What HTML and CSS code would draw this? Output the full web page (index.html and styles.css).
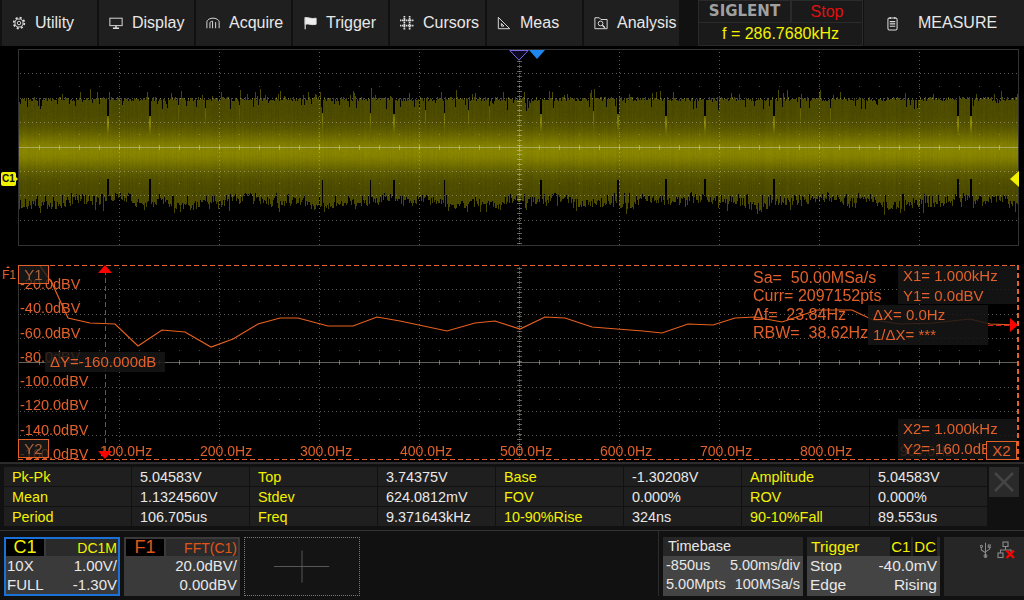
FILE: index.html
```html
<!DOCTYPE html>
<html lang="en">
<head>
    <meta charset="UTF-8">
    <title>SIGLENT scope</title>
    <link rel="stylesheet" href="styles.css">
</head>
<body>
    <div class="scope">
        <header class="menu-bar">
            <div class="menu-btn">
                <svg class="menu-icon" viewBox="0 0 16 16"><circle cx="8" cy="8" r="6.1" stroke-width="2" stroke-dasharray="2.4 2.39"/><circle cx="8" cy="8" r="4.6"/><circle cx="8" cy="8" r="2"/></svg>
                <span>Utility</span>
            </div>
            <div class="menu-btn">
                <svg class="menu-icon" viewBox="0 0 16 16"><rect x="1" y="2.5" width="14" height="8.5"/><path d="M8 11v2.5M4.5 14h7" stroke-width="1.6"/></svg>
                <span>Display</span>
            </div>
            <div class="menu-btn">
                <svg class="menu-icon" viewBox="0 0 16 16"><path d="M1 14V7C1 4 5 2.5 8 2.5S15 4 15 7v7M4.5 14V8C4.5 6.8 6 6 7.5 6M7.5 6V14M11 14V7"/></svg>
                <span>Acquire</span>
            </div>
            <div class="menu-btn">
                <svg class="menu-icon" viewBox="0 0 16 16"><path class="icon-solid" d="M2.5 2C6 1 9 4 15 2.5V9.5C10 11 6 8 2.5 9.5Z"/><path d="M2.5 1.5V15" stroke-width="1.4"/></svg>
                <span>Trigger</span>
            </div>
            <div class="menu-btn">
                <svg class="menu-icon" viewBox="0 0 16 16"><path d="M5 0V16M11 0V16M0 5H16M0 11H16" stroke-width="2" stroke-dasharray="1.6 .7"/></svg>
                <span>Cursors</span>
            </div>
            <div class="menu-btn">
                <svg class="menu-icon" viewBox="0 0 16 16"><path d="M1.5 14.5V1.5L14.5 14.5ZM5 11.5V8.5L8 11.5Z"/></svg>
                <span>Meas</span>
            </div>
            <div class="menu-btn">
                <svg class="menu-icon" viewBox="0 0 16 16"><path d="M1 14.5V2H6L8 4H15V14.5Z"/><circle cx="7.5" cy="8.5" r="2.7"/><path d="M9.5 10.5L12.5 13.5" stroke-width="1.6"/></svg>
                <span>Analysis</span>
            </div>
            <div class="status-box">
                <div class="status-top">
                    <div class="brand">SIGLENT</div>
                    <div class="run-state">Stop</div>
                </div>
                <div class="freq-read">f = 286.7680kHz</div>
            </div>
            <div class="menu-title">
                <svg class="menu-icon clip-icon" viewBox="0 0 12 16"><rect x="1" y="2" width="10" height="13" rx="1.5"/><path d="M3.5 1v2M8.5 1v2M3 6h6M3 8.5h6M3 11h6" stroke-width="1.3"/></svg>
                <span>MEASURE</span>
            </div>
        </header>

        <main class="screen">
            <div class="plot plot-time">
                <canvas id="time-canvas" width="1002" height="197"></canvas>
                <svg class="trig-pos" viewBox="0 0 20 11"><path d="M.8 .5H19.2L10 10.2Z"/></svg>
                <div class="tri tri-blue"></div>
                <div class="ch-tag">C1</div>
                <div class="tri tri-level"></div>
            </div>

            <div class="plot plot-fft">
                <canvas id="fft-canvas" width="1002" height="196"></canvas>
                <div class="f1-mark">F1</div>

                <div class="y-scale">
                    <div>-20.0dBV</div>
                    <div>-40.0dBV</div>
                    <div>-60.0dBV</div>
                    <div>-80.0dBV</div>
                    <div>-100.0dBV</div>
                    <div>-120.0dBV</div>
                    <div>-140.0dBV</div>
                    <div>-160.0dBV</div>
                </div>
                <div class="x-scale">
                    <div>100.0Hz</div>
                    <div>200.0Hz</div>
                    <div>300.0Hz</div>
                    <div>400.0Hz</div>
                    <div>500.0Hz</div>
                    <div>600.0Hz</div>
                    <div>700.0Hz</div>
                    <div>800.0Hz</div>
                    <div>900.0Hz</div>
                </div>

                <div class="fft-info">
                    <div>Sa=&nbsp;&nbsp;50.00MSa/s</div>
                    <div>Curr= 2097152pts</div>
                    <div>&#916;f=&nbsp;&nbsp;23.84Hz</div>
                    <div>RBW=&nbsp;&nbsp;38.62Hz</div>
                </div>

                <div class="cursor-box box-x1">
                    <div>X1= 1.000kHz</div>
                    <div>Y1= 0.0dBV</div>
                </div>
                <div class="cursor-box box-dx">
                    <div>&#916;X= 0.0Hz</div>
                    <div>1/&#916;X= ***</div>
                </div>
                <div class="cursor-box box-x2">
                    <div>X2= 1.000kHz</div>
                    <div>Y2=-160.0dBV</div>
                </div>
                <div class="cursor-box box-dy">&#916;Y=-160.000dB</div>

                <div class="cursor-tag tag-y1">Y1</div>
                <div class="cursor-tag tag-y2">Y2</div>
                <div class="cursor-tag tag-x2">X2</div>

                <div class="tri tri-red-up"></div>
                <div class="tri tri-red-down"></div>
                <div class="tri tri-red-right"></div>
            </div>
        </main>

        <section class="measure-panel">
            <div class="measure-grid">
                <div class="m-name">Pk-Pk</div><div class="m-val">5.04583V</div>
                <div class="m-name">Top</div><div class="m-val">3.74375V</div>
                <div class="m-name">Base</div><div class="m-val">-1.30208V</div>
                <div class="m-name">Amplitude</div><div class="m-val">5.04583V</div>
                <div class="m-name">Mean</div><div class="m-val">1.1324560V</div>
                <div class="m-name">Stdev</div><div class="m-val">624.0812mV</div>
                <div class="m-name">FOV</div><div class="m-val">0.000%</div>
                <div class="m-name">ROV</div><div class="m-val">0.000%</div>
                <div class="m-name">Period</div><div class="m-val">106.705us</div>
                <div class="m-name">Freq</div><div class="m-val">9.371643kHz</div>
                <div class="m-name">10-90%Rise</div><div class="m-val">324ns</div>
                <div class="m-name">90-10%Fall</div><div class="m-val">89.553us</div>
            </div>
            <div class="close-btn">
                <svg viewBox="0 0 30 30"><path d="M6 6L24 24M24 6L6 24"/></svg>
            </div>
        </section>

        <footer class="status-bar">
            <div class="ch-card ch-active">
                <div class="ch-head">
                    <div class="ch-name ch-yellow">C1</div>
                    <div class="ch-mode ch-yellow">DC1M</div>
                </div>
                <div class="ch-row"><span>10X</span><span>1.00V/</span></div>
                <div class="ch-row"><span>FULL</span><span>-1.30V</span></div>
            </div>
            <div class="ch-card">
                <div class="ch-head">
                    <div class="ch-name ch-orange">F1</div>
                    <div class="ch-mode ch-orange">FFT(C1)</div>
                </div>
                <div class="ch-row"><span></span><span>20.0dBV/</span></div>
                <div class="ch-row"><span></span><span>0.00dBV</span></div>
            </div>
            <div class="ch-add">
                <svg viewBox="0 0 116 59"><path d="M29 29.5H86M58 13V46"/></svg>
            </div>

            <div class="status-right">
                <div class="info-card card-time">
                    <div class="info-head">Timebase</div>
                    <div class="info-body">
                        <div class="info-row"><span>-850us</span><span>5.00ms/div</span></div>
                        <div class="info-row"><span>5.00Mpts</span><span>100MSa/s</span></div>
                    </div>
                </div>
                <div class="info-card card-trig">
                    <div class="info-head trig-head">
                        <span class="trig-title">Trigger</span>
                        <span class="trig-tag">C1</span>
                        <span class="trig-tag">DC</span>
                    </div>
                    <div class="info-body">
                        <div class="info-row"><span>Stop</span><span>-40.0mV</span></div>
                        <div class="info-row"><span>Edge</span><span>Rising</span></div>
                    </div>
                </div>
                <div class="tray">
                    <svg class="tray-icon" viewBox="0 0 12 18"><path d="M6 1V17M1.5 6V9L6 12M10.5 5V8L6 11" /><circle cx="6" cy="15.5" r="1.6"/><rect x="9" y="3.5" width="3" height="2.5"/><circle cx="1.5" cy="5" r="1.3"/></svg>
                    <svg class="tray-icon net-icon" viewBox="0 0 18 18"><rect x="6" y="1" width="5" height="4.5"/><rect x="1" y="12" width="5" height="4.5"/><path d="M8.5 5.5V9M3.5 12V9H14V11"/><path class="net-x" d="M9.5 9.5L17 17M17 9.5L9.5 17"/></svg>
                </div>
            </div>
        </footer>
    </div>

    <script src="plot.js"></script>
</body>
</html>
```
FILE: styles.css
```css
* {
    box-sizing: border-box;
}

body {
    margin: 0;
    background-color: #000;
    font-family: "Liberation Sans", Arial, sans-serif;
    color: #e8e8e8;
}

.scope {
    width: 1024px;
    height: 600px;
    overflow: hidden;
    display: flex;
    flex-direction: column;
}

/* top menu */
.menu-bar {
    height: 46px;
    flex: none;
    display: flex;
    gap: 2px;
    padding-left: 2px;
    background-color: #111;
    font-size: 16px;
}

.menu-btn {
    width: 95px;
    display: flex;
    align-items: center;
    gap: 9px;
    padding-left: 10px;
    background-color: #1f1f1f;
}

.menu-icon {
    width: 14px;
    height: 14px;
    flex: none;
    fill: none;
    stroke: #ddd;
    stroke-width: 1.1;
}

.clip-icon {
    width: 11px;
    height: 15px;
}

.icon-solid {
    fill: #eee;
}

.status-box {
    width: 165px;
    margin-left: 17px;
    display: flex;
    flex-direction: column;
    border: 1px solid #2a2a2a;
    background-color: #1a1a1a;
}

.status-top {
    height: 22px;
    display: flex;
    border-bottom: 1px solid #2a2a2a;
}

.brand {
    width: 93px;
    border-right: 2px solid #2a2a2a;
    text-align: center;
    font-family: "DejaVu Sans", sans-serif;
    font-weight: 700;
    font-size: 15px;
    line-height: 20px;
    color: #a0a0a0;
}

.run-state {
    flex: 1;
    text-align: center;
    line-height: 21px;
    color: #e01010;
}

.freq-read {
    flex: 1;
    text-align: center;
    line-height: 21px;
    color: #f2f200;
}

.menu-title {
    flex: 1;
    margin-left: -1px;
    display: flex;
    align-items: center;
    gap: 20px;
    padding-left: 23px;
    background-color: #1f1f1f;
}

/* plots */
.screen {
    height: 416px;
    flex: none;
    padding-top: 3px;
}

.plot {
    position: relative;
    overflow: hidden;
}

.plot canvas {
    display: block;
    margin-left: 18px;
}

.plot-time {
    height: 197px;
}

.plot-fft {
    height: 196px;
    margin-top: 19px;
    color: #e2602a;
}

.tri {
    position: absolute;
    width: 0;
    height: 0;
    border-style: solid;
    border-color: transparent;
}

.trig-pos {
    position: absolute;
    left: 509px;
    top: 1px;
    width: 20px;
    height: 11px;
    fill: #0c0820;
    stroke: #7a68e0;
    stroke-width: 1;
}

.tri-blue {
    left: 529px;
    top: 1px;
    border-width: 9px 8.5px 0;
    border-top-color: #1e88ee;
}

.tri-level {
    left: 1010px;
    top: 122px;
    border-width: 8px 9px 8px 0;
    border-right-color: #f2f200;
}

.ch-tag {
    position: absolute;
    left: 1px;
    top: 123px;
    width: 15px;
    height: 14px;
    border-radius: 2px;
    background-color: #f2f200;
    color: #111;
    font-size: 10px;
    font-weight: 700;
    line-height: 14px;
    text-align: center;
}

.ch-tag::after {
    content: "";
    position: absolute;
    left: 15px;
    top: 5px;
    border-style: solid;
    border-width: 2px 0 2px 2px;
    border-color: transparent transparent transparent #f2f200;
}

.f1-mark {
    position: absolute;
    left: 2px;
    top: 4px;
    font-size: 12px;
    line-height: 12px;
}

.f1-mark::before {
    content: "";
    position: absolute;
    left: 4px;
    top: -3px;
    border-style: solid;
    border-width: 0 2.5px 2px;
    border-color: transparent transparent #e2602a;
}

.y-scale {
    position: absolute;
    left: 20px;
    top: 7px;
    font-size: 14.5px;
}

.y-scale div {
    height: 24.3px;
    line-height: 24.3px;
}

.x-scale {
    position: absolute;
    left: 100px;
    top: 177px;
    display: flex;
    font-size: 14px;
    line-height: 18px;
}

.x-scale div {
    width: 100px;
}

.fft-info {
    position: absolute;
    left: 753px;
    top: 4px;
    font-size: 16px;
    line-height: 18.4px;
}

.cursor-box {
    position: absolute;
    padding-left: 5px;
    overflow: hidden;
    background-color: rgba(22, 22, 22, 0.85);
    font-size: 15px;
    line-height: 19.5px;
    white-space: nowrap;
}

.box-x1 {
    left: 898px;
    top: 1px;
    width: 119px;
    height: 38px;
}

.box-dx {
    left: 868px;
    top: 40px;
    width: 120px;
    height: 40px;
}

.box-x2 {
    left: 898px;
    top: 154px;
    width: 119px;
    height: 40px;
}

.box-dy {
    left: 45px;
    top: 87px;
    width: 120px;
    height: 20px;
}

.cursor-tag {
    position: absolute;
    width: 31px;
    height: 19px;
    border: 1px solid #e2602a;
    background-color: rgba(30, 30, 30, 0.75);
    color: #a8623c;
    font-size: 15px;
    line-height: 17px;
    text-align: center;
}

.tag-y1 {
    left: 18px;
    top: 0;
}

.tag-y2 {
    left: 18px;
    top: 174px;
}

.tag-x2 {
    left: 986px;
    top: 176px;
    background-color: #161616;
    color: #e2602a;
}

.tri-red-up {
    left: 98px;
    top: 0;
    border-width: 0 7.5px 8px;
    border-bottom-color: #f00;
}

.tri-red-down {
    left: 98px;
    top: 186px;
    border-width: 8px 7.5px 0;
    border-top-color: #f00;
}

.tri-red-right {
    left: 1010px;
    top: 53px;
    border-width: 7.5px 0 7.5px 8px;
    border-left-color: #f00;
}

/* measurement table */
.measure-panel {
    height: 68px;
    flex: none;
    display: flex;
    padding: 3px 4px 0;
    background-color: #111;
    border-top: 2px solid #2c2c2c;
    font-size: 14.4px;
}

.measure-grid {
    display: grid;
    grid-template-columns: repeat(4, 127px 117px);
    grid-auto-rows: 19px;
    column-gap: 1px;
    row-gap: 1px;
}

.m-name,
.m-val {
    padding-left: 8px;
    background-color: #1f1f1f;
    line-height: 21px;
}

.m-name {
    color: #f2f200;
}

.close-btn {
    width: 30px;
    height: 30px;
    margin-left: 2px;
    background-color: #2a2a2a;
}

.close-btn svg {
    display: block;
    stroke: #454545;
    stroke-width: 2.5;
}

/* bottom status */
.status-bar {
    flex: 1;
    display: flex;
    gap: 4px;
    padding: 6px 0 4px 4px;
    background-color: #111;
    border-top: 1px solid #333;
    font-size: 15px;
}

.ch-card {
    width: 116px;
    border: 2px solid #3a3a3a;
    background-color: #3a3a3a;
}

.ch-active {
    border-color: #1a72d8;
}

.ch-head {
    height: 17px;
    display: flex;
    gap: 2px;
}

.ch-name {
    width: 38px;
    background-color: #000;
    font-size: 18px;
    line-height: 17px;
    text-align: center;
}

.ch-mode {
    flex: 1;
    padding-right: 1px;
    background-color: #2a2a2a;
    font-size: 14px;
    line-height: 18px;
    text-align: right;
}

.ch-yellow {
    color: #f2f200;
}

.ch-orange {
    color: #e0561a;
}

.ch-row {
    display: flex;
    justify-content: space-between;
    height: 19px;
    padding: 0 1px;
    line-height: 19px;
}

.ch-add {
    width: 116px;
    border: 1px dotted #777;
    background-color: #141414;
}

.ch-add svg {
    display: block;
    width: 114px;
    height: 57px;
    stroke: #5a5a5a;
    fill: none;
}

.status-right {
    margin-left: auto;
    display: flex;
    gap: 4px;
    margin-top: -6px;
    padding-top: 6px;
    padding-left: 4px;
    border-left: 1px solid #2c2c2c;
}

.info-card {
    display: flex;
    flex-direction: column;
    background-color: #444;
}

.card-time {
    width: 140px;
    font-size: 14.5px;
}

.card-trig {
    width: 133px;
    font-size: 15.5px;
}

.info-head {
    height: 19px;
    padding-left: 5px;
    background-color: #262626;
    line-height: 19px;
}

.info-body {
    padding: 0 3px;
}

.info-row {
    display: flex;
    justify-content: space-between;
    height: 19px;
    line-height: 19px;
}

.trig-head {
    display: flex;
    gap: 2px;
    padding: 0 3px 0 4px;
    color: #f2f200;
}

.trig-title {
    flex: 1;
}

.trig-tag {
    padding: 0 1px;
    background-color: #111;
    font-size: 15px;
}

.tray {
    width: 80px;
    display: flex;
    justify-content: flex-end;
    gap: 6px;
    padding: 4px 9px 0 0;
    background-color: #262626;
}

.tray-icon {
    width: 11px;
    height: 18px;
    fill: none;
    stroke: #8a8a8a;
    stroke-width: 1.1;
}

.net-icon {
    width: 18px;
}

.net-x {
    stroke: #f00;
    stroke-width: 2.4;
}
```
FILE: plot.js
```js
// Draws the two scope traces. Everything is in page pixels, the canvases start at x=18.
const LEFT = 18;
const TRACE_ORANGE = "#e8601e";

let seed = 20117;
function rnd() {
    seed = (seed * 1664525 + 1013904223) % 4294967296;
    return seed / 4294967296;
}

// x, strength of the dropouts in the yellow band
const dropouts = [
    [107, 1], [149, 1], [178, 0.3], [205, 0.5], [239, 0.3], [322, 0.8], [370, 0.8],
    [393, 0.9], [425, 0.6], [444, 0.8], [468, 0.6], [489, 0.4], [540, 0.9], [593, 0.7],
    [617, 0.9], [665, 1], [704, 1], [773, 1], [800, 0.5], [830, 0.5], [957, 1], [970, 1]
];

// frequency trace points, read off the screen
const spectrum = [
    [40, 266], [52, 283], [62, 305], [68, 318], [90, 323], [115, 324], [138, 346], [162, 330],
    [185, 332], [211, 347], [233, 339], [258, 324], [280, 318], [298, 318], [328, 326], [353, 326],
    [377, 317], [400, 321], [447, 331], [475, 323], [495, 321], [520, 329], [545, 317], [565, 318],
    [592, 327], [617, 329], [643, 331], [662, 333], [688, 324], [713, 325], [735, 318], [755, 317],
    [782, 322], [817, 310], [852, 310], [873, 320], [900, 324], [933, 323], [970, 319], [990, 324],
    [1017, 325]
];

function drawBand(ctx, top) {
    const w = ctx.canvas.width;
    const h = ctx.canvas.height;
    const img = ctx.createImageData(w, h);

    for (let x = 19; x < 1018; x++) {
        let bandTop = 97 + rnd() * 4;
        let bandBottom = 197 + rnd() * 9 + 3 * Math.sin(x / 23) + 2 * Math.sin(x / 7);
        const roll = rnd();
        if (roll < 0.08) bandTop -= 3 + rnd() * 6;
        else if (roll < 0.16) bandTop += 3 + rnd() * 7;
        if (rnd() < 0.2) bandBottom += rnd() * 7;
        if (rnd() < 0.1) bandBottom = 193 + rnd() * 4;
        const colShade = (rnd() - 0.5) * 6;

        let drop = null;
        for (const d of dropouts) {
            if (x === d[0] || (d[1] >= 0.9 && x === d[0] + 1)) drop = d;
        }
        if (drop) {
            bandTop = 100 + drop[1] * 16;
            if (drop[1] > 0.75) bandBottom = 186 - drop[1] * 7;
        }

        for (let y = Math.round(bandTop); y < Math.round(bandBottom); y++) {
            const d = y - 151;
            let v = 75 + 60 * Math.exp(-(d * d) / 380) + colShade + (rnd() - 0.5) * 6;
            if (drop) {
                const off = y - bandTop - 6;
                v += 55 * drop[1] * Math.exp(-(off * off) / 60);
            }
            const i = ((y - top) * w + (x - LEFT)) * 4;
            img.data[i] = v;
            img.data[i + 1] = v * 0.98;
            img.data[i + 2] = 0;
            img.data[i + 3] = 255;
        }
    }
    ctx.putImageData(img, 0, 0);
}

function drawGrid(ctx, top, step, rows) {
    const bottom = top + step * rows;
    const centerY = Math.round(top + step * rows / 2 - 0.3);

    // dotted grid
    ctx.fillStyle = "rgba(200, 200, 190, 0.45)";
    for (let x = 119; x < 1010; x += 100) {
        if (x === 519) continue;
        for (let y = top + 2; y < bottom; y += 4) ctx.fillRect(x, Math.round(y), 1, 1);
    }
    for (let r = 1; r < rows; r++) {
        if (r === rows / 2) continue;
        const y = Math.floor(top + step * r);
        for (let x = 20; x < 1018; x += 4) ctx.fillRect(x, y, 1, 1);
    }

    // sparse dots half way between the rows
    ctx.fillStyle = "rgba(200, 200, 190, 0.35)";
    for (let r = 1; r < rows - 1; r += 2) {
        const y = Math.floor(top + step * (r + 0.5));
        for (let x = 39; x < 1018; x += 20) ctx.fillRect(x, y, 1, 1);
    }

    // centre axes with ticks
    ctx.fillStyle = "rgba(215, 215, 200, 0.45)";
    ctx.fillRect(19, centerY, 999, 1);
    for (let x = 39; x < 1018; x += 20) ctx.fillRect(x, centerY - 2, 1, 5);
    for (let y = top + 1; y < bottom; y += 2) ctx.fillRect(519, Math.round(y), 1, 1);
    for (let y = top + 2; y < bottom; y += 4.9) ctx.fillRect(517, Math.round(y), 5, 1);

    // frame
    ctx.fillStyle = "#333";
    ctx.fillRect(18, top - 0.5, 1, bottom - top + 1);
}

function dashed(ctx, color, x1, y1, x2, y2, dash) {
    ctx.save();
    ctx.strokeStyle = color;
    ctx.setLineDash(dash);
    ctx.beginPath();
    ctx.moveTo(x1, y1);
    ctx.lineTo(x2, y2);
    ctx.stroke();
    ctx.restore();
}

function drawTime() {
    const ctx = document.getElementById("time-canvas").getContext("2d");
    const top = 49;
    drawBand(ctx, top);
    ctx.translate(-LEFT, -top);
    drawGrid(ctx, 49.5, 24.4, 8);
    ctx.strokeStyle = "#333";
    ctx.strokeRect(18.5, 49.5, 1000, 196);
}

function drawFft() {
    const ctx = document.getElementById("fft-canvas").getContext("2d");
    const top = 265;
    ctx.translate(-LEFT, -top);
    drawGrid(ctx, 265.5, 24.3, 8);

    ctx.strokeStyle = TRACE_ORANGE;
    ctx.lineWidth = 1.2;
    ctx.beginPath();
    spectrum.forEach((p, i) => {
        if (i === 0) ctx.moveTo(p[0], p[1]);
        else ctx.lineTo(p[0], p[1]);
    });
    ctx.stroke();
    ctx.lineWidth = 1;

    dashed(ctx, "#e2602a", 18, 265.5, 1019, 265.5, [5, 3]);
    dashed(ctx, "#e2602a", 18, 459.5, 1019, 459.5, [5, 3]);
    ctx.lineWidth = 2;
    dashed(ctx, "#e2602a", 1018, 265, 1018, 460, [5, 3]);
    ctx.lineWidth = 1;
    dashed(ctx, "#e02020", 105.5, 270, 105.5, 455, [5, 3]);
    dashed(ctx, "#e02020", 988, 325.5, 1011, 325.5, [5, 3]);
}

drawTime();
drawFft();
```
